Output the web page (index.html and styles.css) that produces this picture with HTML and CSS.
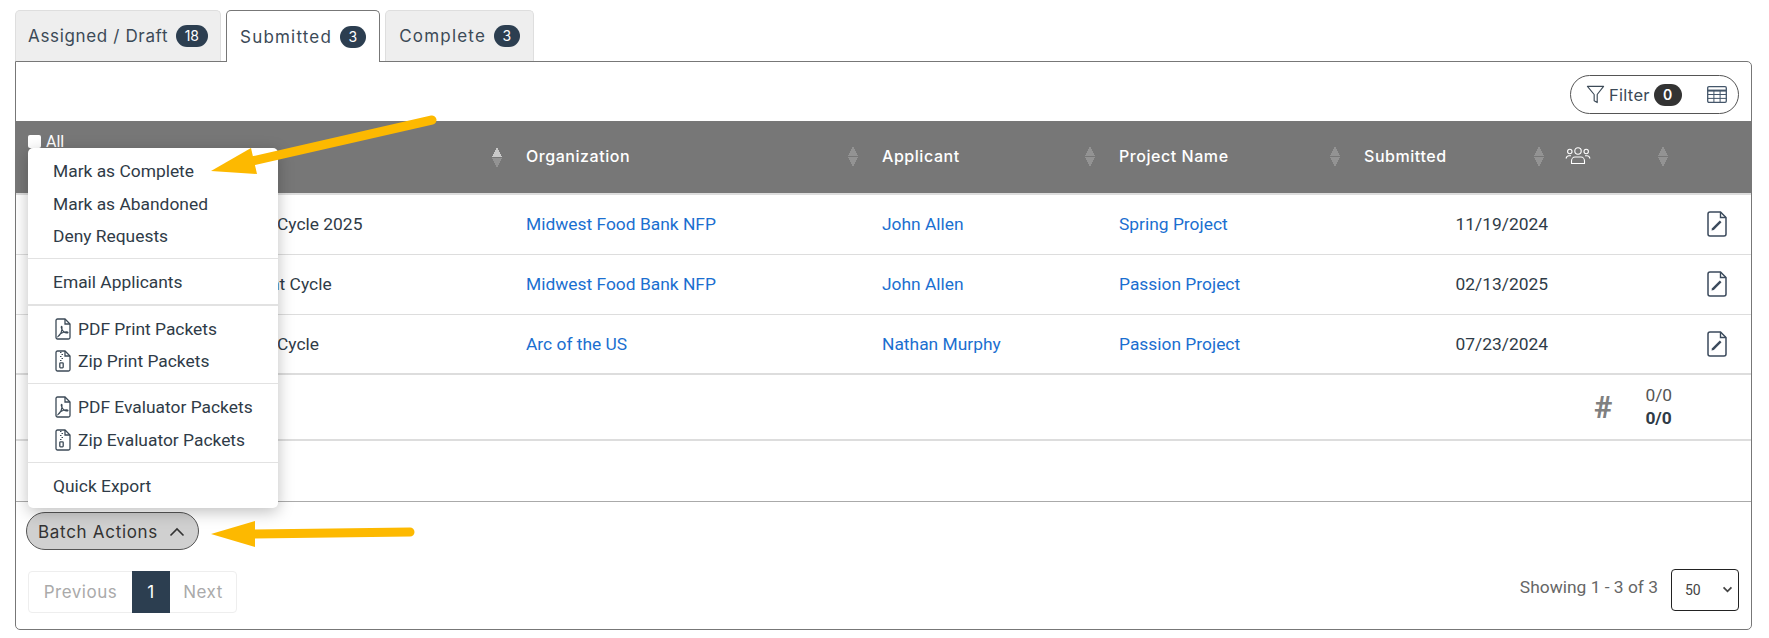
FILE: index.html
```html
<!DOCTYPE html>
<html>
<head>
	<meta charset="UTF-8">
	<title>Submitted Requests</title>
	<link rel="stylesheet" href="styles.css">
</head>
<body>
	<svg class="hidden-defs" width="0" height="0">
		<symbol id="i-pdf" viewBox="0 0 16 22">
			<path d="M2.5 1h7.5l5 5v13.5a1.5 1.5 0 0 1-1.5 1.5h-11A1.5 1.5 0 0 1 1 19.5v-17A1.5 1.5 0 0 1 2.5 1z" fill="none" stroke="currentColor" stroke-width="1.3"/>
			<path d="M10 1v5h5" fill="none" stroke="currentColor" stroke-width="1.3"/>
			<path d="M3 18.5c2-1 3.5-4 4-8 .2-2-.3-2.5-.7-2-.5.8.8 4 3 5.8 1.2.9 3.5 1 3.7.2.1-.8-2.5-.8-4.500-.3-2 .5-4.500 2.500-5.500 4.300z" fill="none" stroke="currentColor" stroke-width="1.1"/>
		</symbol>
		<symbol id="i-zip" viewBox="0 0 16 22">
			<path d="M2.5 1h7.5l5 5v13.5a1.5 1.5 0 0 1-1.5 1.5h-11A1.5 1.5 0 0 1 1 19.5v-17A1.5 1.5 0 0 1 2.5 1z" fill="none" stroke="currentColor" stroke-width="1.3"/>
			<path d="M10 1v5h5" fill="none" stroke="currentColor" stroke-width="1.3"/>
			<path d="M5 2.5h1.500M6.500 4.500H8M5 6.500h1.500M6.500 8.500H8M5 10.500h1.500" stroke="currentColor" stroke-width="1.2"/>
			<rect x="4.800" y="12.800" width="3.400" height="5" rx=".7" fill="none" stroke="currentColor" stroke-width="1.3"/>
		</symbol>
		<symbol id="i-edit" viewBox="0 0 20 26">
			<path d="M3 1h10.500L19 6.500V23a2 2 0 0 1-2 2H3a2 2 0 0 1-2-2V3a2 2 0 0 1 2-2z" fill="none" stroke="currentColor" stroke-width="1.5"/>
			<path d="M13.500 1v5.500H19" fill="none" stroke="currentColor" stroke-width="1.4"/>
			<path d="M4.500 19.500l.6-2.300 7.700-7.700 1.700 1.700-7.700 7.700z" fill="currentColor"/>
		</symbol>
	</svg>

	<div class="page">
		<div class="tabs">
			<div class="tab tab-first">Assigned / Draft <span class="count">18</span></div>
			<div class="tab tab-active">Submitted <span class="count">3</span></div>
			<div class="tab">Complete <span class="count">3</span></div>
		</div>

		<div class="panel">
			<div class="toolbar">
				<div class="tool-pill">
					<svg class="icon-filter" viewBox="0 0 20 20" width="19" height="19">
						<path d="M1.5 1.5h17L11.800 10v8.500l-3.200-1.800V10z" fill="none" stroke="currentColor" stroke-width="1.2" stroke-linejoin="round"/>
					</svg>
					<span class="filter-text">Filter</span>
					<span class="filter-count">0</span>
					<svg class="icon-table" viewBox="0 0 20 17" width="20" height="17">
						<rect x=".7" y=".7" width="18.600" height="15.600" rx="1.2" fill="none" stroke="currentColor" stroke-width="1.3"/>
						<path d="M.7 4.600h18.600" stroke="currentColor" stroke-width="2"/>
						<path d="M.7 8.500h18.600M.7 12.400h18.600M6.900 4v12M13.100 4v12" stroke="currentColor" stroke-width="1"/>
					</svg>
				</div>
			</div>

			<table class="grid">
				<colgroup>
					<col class="c-name">
					<col class="c-org">
					<col class="c-applicant">
					<col class="c-project">
					<col class="c-date">
					<col class="c-people">
					<col class="c-action">
				</colgroup>
				<thead>
					<tr>
						<th class="th-select">
							<label class="select-all"><span class="check"></span>All</label>
							<span class="sort sort-active"></span>
						</th>
						<th><div class="th-in">Organization <span class="sort"></span></div></th>
						<th><div class="th-in">Applicant <span class="sort"></span></div></th>
						<th><div class="th-in">Project Name <span class="sort"></span></div></th>
						<th class="th-date"><div class="th-in">Submitted <span class="sort"></span></div></th>
						<th class="th-people"><div class="th-in">
							<svg class="icon-people" viewBox="0 0 26 18" width="26" height="18">
								<circle cx="13" cy="4" r="3.2" fill="none" stroke="currentColor" stroke-width="1.1"/>
								<circle cx="4.800" cy="4.500" r="2.2" fill="none" stroke="currentColor" stroke-width="1.1"/>
								<circle cx="21.200" cy="4.500" r="2.2" fill="none" stroke="currentColor" stroke-width="1.1"/>
								<path d="M6.500 16.500v-2.500c0-2 1.500-4 3.500-4h6c2 0 3.500 2 3.500 4v2.500z" fill="none" stroke="currentColor" stroke-width="1.1" stroke-linejoin="round"/>
								<path d="M1 11.500c.5-1.800 1.700-2.800 3-2.800h2M25 11.500c-.5-1.800-1.700-2.800-3-2.800h-2" fill="none" stroke="currentColor" stroke-width="1.1"/>
							</svg>
							<span class="sort"></span>
						</div></th>
						<th></th>
					</tr>
				</thead>
				<tbody>
					<tr>
						<td class="td-name">Cycle 2025</td>
						<td><a href="#">Midwest Food Bank NFP</a></td>
						<td><a href="#">John Allen</a></td>
						<td><a href="#">Spring Project</a></td>
						<td class="td-date">11/19/2024</td>
						<td></td>
						<td class="td-edit"><svg class="icon-edit" width="20" height="26"><use href="#i-edit"/></svg></td>
					</tr>
					<tr>
						<td class="td-name td-name-long">nt Cycle</td>
						<td><a href="#">Midwest Food Bank NFP</a></td>
						<td><a href="#">John Allen</a></td>
						<td><a href="#">Passion Project</a></td>
						<td class="td-date">02/13/2025</td>
						<td></td>
						<td class="td-edit"><svg class="icon-edit" width="20" height="26"><use href="#i-edit"/></svg></td>
					</tr>
					<tr class="last-row">
						<td class="td-name">Cycle</td>
						<td><a href="#">Arc of the US</a></td>
						<td><a href="#">Nathan Murphy</a></td>
						<td><a href="#">Passion Project</a></td>
						<td class="td-date">07/23/2024</td>
						<td></td>
						<td class="td-edit"><svg class="icon-edit" width="20" height="26"><use href="#i-edit"/></svg></td>
					</tr>
				</tbody>
				<tfoot>
					<tr class="totals">
						<td colspan="5"></td>
						<td colspan="2">
							<div class="totals-in">
								<span class="hash">#</span>
								<div class="ratio">0/0<br><b>0/0</b></div>
							</div>
						</td>
					</tr>
					<tr class="spacer"><td colspan="7"></td></tr>
				</tfoot>
			</table>

			<div class="bottom">
				<button class="batch" type="button">Batch Actions
					<svg viewBox="0 0 16 10" width="16" height="10"><path d="M1.5 8.500L8 2l6.500 6.500" fill="none" stroke="currentColor" stroke-width="1.6"/></svg>
				</button>
				<div class="bottom-bar">
					<div class="pager">
						<span class="page-item page-prev">Previous</span>
						<span class="page-item page-on">1</span>
						<span class="page-item">Next</span>
					</div>
					<div class="showing">
						<span>Showing 1 - 3 of 3</span>
						<div class="size-select">50
							<svg viewBox="0 0 12 8" width="11" height="7"><path d="M1.5 1.500L6 6l4.500-4.500" fill="none" stroke="currentColor" stroke-width="2"/></svg>
						</div>
					</div>
				</div>
			</div>

			<div class="batch-menu">
				<div class="menu-group">
					<div class="menu-item">Mark as Complete</div>
					<div class="menu-item">Mark as Abandoned</div>
					<div class="menu-item">Deny Requests</div>
				</div>
				<div class="menu-group">
					<div class="menu-item">Email Applicants</div>
				</div>
				<div class="menu-group">
					<div class="menu-item"><svg class="menu-icon" width="16" height="22"><use href="#i-pdf"/></svg>PDF Print Packets</div>
					<div class="menu-item"><svg class="menu-icon" width="16" height="22"><use href="#i-zip"/></svg>Zip Print Packets</div>
				</div>
				<div class="menu-group">
					<div class="menu-item"><svg class="menu-icon" width="16" height="22"><use href="#i-pdf"/></svg>PDF Evaluator Packets</div>
					<div class="menu-item"><svg class="menu-icon" width="16" height="22"><use href="#i-zip"/></svg>Zip Evaluator Packets</div>
				</div>
				<div class="menu-group">
					<div class="menu-item">Quick Export</div>
				</div>
			</div>
		</div>
	</div>

	<!-- annotation arrows drawn over the screenshot -->
	<svg class="arrows" viewBox="0 0 1769 638" width="1769" height="638">
		<path d="M432 120L252 161" stroke="#fdb900" stroke-width="9" stroke-linecap="round"/>
		<path d="M211 171L251 148L257 174z" fill="#fdb900"/>
		<path d="M410 532L250 534" stroke="#fdb900" stroke-width="9" stroke-linecap="round"/>
		<path d="M211 534L255 521V547z" fill="#fdb900"/>
	</svg>
</body>
</html>
```

FILE: styles.css
```css
body {
	margin: 0;
	background-color: white;
	font-family: "Roboto", "Liberation Sans", sans-serif;
	font-size: 17.4px;
	color: #2f3b47;
	overflow: hidden;
}
.hidden-defs {
	position: absolute;
}
.page {
	padding: 10px 17px 0 15px;
}

/* tabs */
.tabs {
	display: flex;
	gap: 5px;
	font-family: "Inter", "Liberation Sans", sans-serif;
}
.tab {
	display: flex;
	align-items: center;
	gap: 8px;
	height: 51px;
	box-sizing: border-box;
	padding: 0 13px 0 13.5px;
	background-color: #eeeeee;
	border: 1px solid #dedede;
	border-bottom: none;
	border-radius: 5px 5px 0 0;
	font-size: 17px;
	letter-spacing: 1.2px;
	color: #3c4a57;
}
.tab-first {
	letter-spacing: 0.65px;
	padding: 0 12px;
}
.tab-active {
	height: 52px;
	margin-bottom: -1px;
	background-color: white;
	border-color: #777777;
	position: relative;
	z-index: 1;
}
.count {
	background-color: #2c3e50;
	color: white;
	border-radius: 12px;
	font-size: 14px;
	letter-spacing: 0;
	padding: 2px 8.5px;
	line-height: 18px;
}

/* panel */
.panel {
	position: relative;
	border: 1px solid #777777;
	border-radius: 0 5px 5px 5px;
	height: 569px;
	box-sizing: border-box;
}
.toolbar {
	display: flex;
	justify-content: flex-end;
	height: 59px;
	padding: 13px 12px 0 0;
	box-sizing: border-box;
}
.tool-pill {
	display: flex;
	align-items: center;
	width: 169px;
	height: 39px;
	box-sizing: border-box;
	border: 1px solid #555555;
	border-radius: 20px;
	padding-left: 15px;
	font-family: "Inter", "Liberation Sans", sans-serif;
	color: #3c4a57;
	font-size: 16.5px;
	letter-spacing: 0.3px;
}
.filter-text {
	margin-left: 4px;
}
.filter-count {
	background-color: #333333;
	color: white;
	border-radius: 12px;
	font-size: 14px;
	font-weight: 600;
	line-height: 22px;
	width: 28px;
	text-align: center;
	margin-left: 4px;
}
.icon-filter {
	color: #3c4a57;
}
.icon-table {
	color: #44566a;
	margin-left: 25px;
}

/* table */
.grid {
	width: 100%;
	table-layout: fixed;
	border-collapse: collapse;
}
.c-name { width: 498px; }
.c-org { width: 356px; }
.c-applicant { width: 237px; }
.c-project { width: 245px; }
.c-date { width: 201px; }
.c-people { width: 127px; }
.c-action { width: 71px; }
.grid th {
	height: 73px;
	padding: 0 12px;
	background-color: #777777;
	border-bottom: 2px solid #dddddd;
	color: white;
	font-family: "Inter", "Liberation Sans", sans-serif;
	font-size: 16px;
	font-weight: 500;
	letter-spacing: 0.55px;
	text-align: left;
	box-sizing: border-box;
}
.th-in {
	display: flex;
	justify-content: space-between;
	align-items: center;
	position: relative;
	top: -1px;
}
.grid .th-date {
	padding-right: 9px;
}
.th-select {
	position: relative;
}
.select-all {
	position: absolute;
	left: 12px;
	top: 11px;
	display: flex;
	align-items: center;
	gap: 5px;
	font-family: "Roboto", sans-serif;
	font-size: 16px;
	font-weight: 400;
	letter-spacing: 0;
}
.check {
	width: 13px;
	height: 13px;
	background-color: white;
	border-radius: 2px;
}
.sort {
	display: block;
	width: 10px;
	height: 21px;
	margin-left: auto;
	background:
		linear-gradient(to top left, #939393 50%, transparent 50%) 0 0 / 5px 10px no-repeat,
		linear-gradient(to top right, #939393 50%, transparent 50%) 5px 0 / 5px 10px no-repeat,
		linear-gradient(to bottom left, #939393 50%, transparent 50%) 0 11px / 5px 10px no-repeat,
		linear-gradient(to bottom right, #939393 50%, transparent 50%) 5px 11px / 5px 10px no-repeat;
}
.sort-active {
	background:
		linear-gradient(to top left, #c9c9c9 50%, transparent 50%) 0 0 / 5px 10px no-repeat,
		linear-gradient(to top right, #c9c9c9 50%, transparent 50%) 5px 0 / 5px 10px no-repeat,
		linear-gradient(to bottom left, #939393 50%, transparent 50%) 0 11px / 5px 10px no-repeat,
		linear-gradient(to bottom right, #939393 50%, transparent 50%) 5px 11px / 5px 10px no-repeat;
}
.grid td {
	height: 60px;
	padding: 0 12px;
	border-bottom: 1px solid #dddddd;
	box-sizing: border-box;
}
.grid .last-row td {
	border-bottom: 2px solid #dddddd;
}
.grid .td-name {
	padding-left: 261px;
}
.grid .td-name-long {
	padding-left: 254px;
}
.grid .td-date {
	text-align: right;
	padding-right: 5px;
}
.td-edit {
	text-align: left;
}
.icon-edit {
	display: block;
	color: #3b4a5c;
	margin-left: 15px;
}
a {
	color: #1b6fd0;
	text-decoration: none;
}
.grid .totals td {
	height: 66px;
	border-bottom: 2px solid #dddddd;
	padding: 0;
}
.totals-in {
	display: flex;
	align-items: center;
	padding-left: 41px;
	gap: 33px;
}
.hash {
	font-size: 31px;
	font-weight: 700;
	color: #808080;
}
.ratio {
	line-height: 23px;
	font-size: 17.4px;
	color: #555555;
}
.ratio b {
	color: #2f3b47;
}
.grid .spacer td {
	height: 61px;
	border-bottom: 1px solid #aaaaaa;
}

/* bottom */
.bottom {
	padding: 10px 12px 0 10px;
}
.batch {
	display: flex;
	align-items: center;
	gap: 11px;
	height: 38px;
	width: 173px;
	box-sizing: border-box;
	padding: 2px 0 0 11px;
	background-color: #d0d0d0;
	border: 1px solid #555555;
	border-radius: 19px;
	font-family: "Inter", "Liberation Sans", sans-serif;
	font-size: 17px;
	letter-spacing: 0.7px;
	color: #333333;
}
.bottom-bar {
	display: flex;
	justify-content: space-between;
	margin-top: 21px;
	padding-left: 2px;
}
.pager {
	display: flex;
	height: 42px;
	border: 1px solid #eeeeee;
	border-radius: 4px;
	box-sizing: border-box;
	font-family: "Inter", "Liberation Sans", sans-serif;
	font-size: 17px;
	letter-spacing: 0.5px;
	color: #aaaaaa;
	width: 209px;
}
.page-item {
	display: flex;
	align-items: center;
	justify-content: center;
	flex: 1;
}
.page-prev {
	flex: 0 0 103px;
}
.page-on {
	flex: 0 0 38px;
	margin: -1px 0;
	background-color: #2c3e50;
	color: white;
}
.showing {
	display: flex;
	gap: 13px;
	align-items: flex-start;
	font-size: 17.4px;
	color: #666666;
	margin-top: -2px;
}
.showing span {
	margin-top: 8px;
}
.size-select {
	display: flex;
	align-items: center;
	justify-content: space-between;
	width: 68px;
	height: 42px;
	box-sizing: border-box;
	padding: 0 5px 0 13px;
	border: 1px solid #222222;
	border-radius: 4px;
	font-size: 14px;
	color: #444444;
}

/* batch dropdown */
.batch-menu {
	position: absolute;
	left: 12px;
	top: 86px;
	width: 250px;
	box-sizing: border-box;
	background-color: white;
	border-radius: 5px;
	box-shadow: 0 4px 16px rgba(0, 0, 0, 0.25);
	z-index: 2;
}
.menu-group {
	padding: 6.5px 0 5.5px;
	border-bottom: 1px solid #e2e2e2;
}
.menu-group:first-child {
	padding-bottom: 5px;
}
.menu-group:last-child {
	border-bottom: none;
	padding-bottom: 6px;
}
.menu-group:nth-child(2) {
	border-bottom: 2px solid #e2e2e2;
}
.menu-item {
	display: flex;
	align-items: center;
	height: 32.8px;
	padding-left: 25px;
	color: #2f3b47;
	white-space: nowrap;
}
.menu-icon {
	margin: 0 7px 0 2px;
	color: #3c4a57;
}

.arrows {
	position: absolute;
	left: 0;
	top: 0;
	z-index: 5;
	pointer-events: none;
}
```
